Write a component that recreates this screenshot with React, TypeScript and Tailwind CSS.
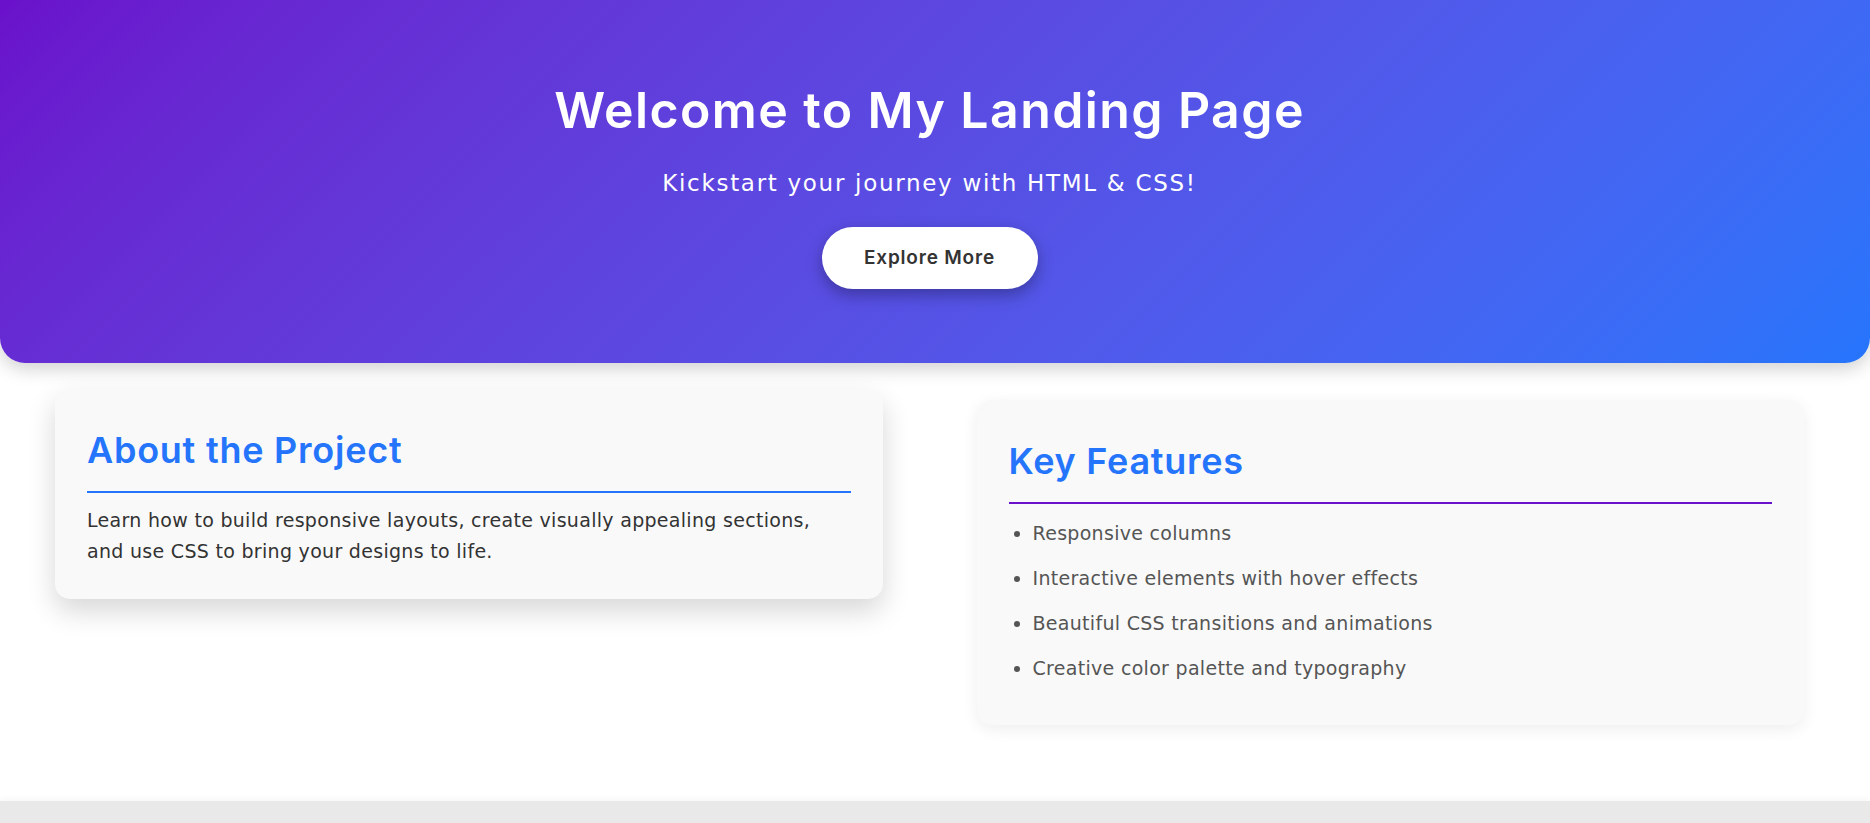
import React from "react";

const features = [
  "Responsive columns",
  "Interactive elements with hover effects",
  "Beautiful CSS transitions and animations",
  "Creative color palette and typography",
];

function Hero() {
  return (
    <header className="h-[363px] rounded-b-[25px] bg-linear-135 from-[#6a11cb] to-[#2575fc] shadow-[0_6px_18px_rgba(0,0,0,0.18)] flex flex-col items-center pt-[80px] pr-[11px] text-white">
      <h1 className="text-[50px] leading-[60px] font-semibold tracking-[1.4px]">
        Welcome to My Landing Page
      </h1>
      <p className="mt-[27px] text-[23px] leading-[33px] tracking-[1.7px] font-['DejaVu_Sans',sans-serif]">
        Kickstart your journey with HTML &amp; CSS!
      </p>
      <button className="mt-[27px] w-[216px] h-[62px] rounded-full bg-white text-[#333] text-[19px] font-semibold tracking-[0.8px] shadow-[0_6px_16px_rgba(0,0,0,0.3)]">
        Explore More
      </button>
    </header>
  );
}

function Card({
  title,
  lineColor,
  raised,
  children,
}: {
  title: string;
  lineColor: string;
  raised?: boolean;
  children: React.ReactNode;
}) {
  return (
    <div
      className={
        raised
          ? "flex-1 bg-[#f9f9f9] rounded-[15px] px-[32px] pt-[39px] pb-[32px] -translate-y-[11px] shadow-[0_12px_28px_rgba(0,0,0,0.16)]"
          : "flex-1 bg-[#f9f9f9] rounded-[15px] px-[32px] pt-[39px] pb-[27px] shadow-[0_4px_16px_rgba(0,0,0,0.07)]"
      }
    >
      <h2
        className={
          "text-[36px] leading-[44px] font-semibold tracking-[0.75px] text-[#2575fc] pb-[19px] border-b-2 " +
          lineColor
        }
      >
        {title}
      </h2>
      {children}
    </div>
  );
}

export default function App() {
  return (
    <div className="bg-white font-['Inter','Liberation_Sans',sans-serif]">
      <Hero />
      <section className="h-[438px] flex items-start gap-[94px] pl-[55px] pr-[66px] pt-[37px]">
        <Card title="About the Project" lineColor="border-[#2575fc]" raised>
          <p className="mt-[12px] text-[19px] leading-[31px] tracking-[0.3px] text-[#333] font-['DejaVu_Sans',sans-serif]">
            Learn how to build responsive layouts, create visually appealing sections,
            and use CSS to bring your designs to life.
          </p>
        </Card>
        <Card title="Key Features" lineColor="border-[#6a11cb]">
          <ul className="mt-[14px] pl-[24px] list-disc text-[19px] leading-[30px] tracking-[0.3px] text-[#555] marker:text-[#555] font-['DejaVu_Sans',sans-serif]">
            {features.map((f) => (
              <li key={f} className="mb-[15px]">
                {f}
              </li>
            ))}
          </ul>
        </Card>
      </section>
      <footer className="h-[80px] bg-[#e9e9e9] shadow-[0_-2px_6px_rgba(0,0,0,0.04)]" />
    </div>
  );
}
